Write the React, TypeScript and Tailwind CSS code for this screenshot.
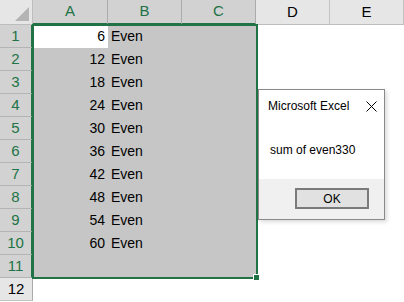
const cols = [
  { name: 'A', w: 'w-[75px]', sel: true },
  { name: 'B', w: 'w-[74px]', sel: true },
  { name: 'C', w: 'w-[74px]', sel: true },
  { name: 'D', w: 'w-[74px]', sel: false },
  { name: 'E', w: 'w-[74px]', sel: false },
]

const rows = Array.from({ length: 12 }, (_, i) => i + 1)

export default function App() {
  return (
    <div className="relative w-[404px] h-[302px] overflow-hidden bg-white font-['Liberation_Sans',sans-serif] text-[14px] text-black">
      {/* column headers */}
      <div className="flex h-[25px]">
        <div className="w-[33px] h-full bg-[#e6e6e6] border-r border-b border-[#bdbdbd] flex items-end justify-end p-[3px]">
          <svg width="14" height="14" viewBox="0 0 14 14">
            <polygon points="14,0 14,14 0,14" fill="#b4b4b4" />
          </svg>
        </div>
        {cols.map((c) => (
          <div
            key={c.name}
            className={
              c.sel
                ? `${c.w} h-full bg-[#d2d2d2] border-r border-[#ababab] border-b-2 border-b-[#217346] text-[#217346] flex items-center justify-center text-[15px]`
                : `${c.w} h-full bg-[#e6e6e6] border-r border-[#c4c4c4] border-b border-b-[#bdbdbd] flex items-center justify-center text-[15px]`
            }
          >
            {c.name}
          </div>
        ))}
      </div>

      {/* rows */}
      {rows.map((r) => {
        const sel = r <= 11
        const val = r <= 10 ? r * 6 : null
        return (
          <div key={r} className="flex h-[23px]">
            <div
              className={
                sel
                  ? 'w-[33px] h-full bg-[#d2d2d2] border-b border-[#b4b4b4] border-r-2 border-r-[#217346] text-[#217346] flex items-center justify-center text-[15px]'
                  : 'w-[33px] h-full bg-[#e6e6e6] border-b border-[#c4c4c4] border-r border-r-[#ababab] flex items-center justify-center text-[15px]'
              }
            >
              {r}
            </div>
            <div className={`w-[75px] h-full flex items-center justify-end pr-[3px] ${r === 1 ? 'bg-white' : sel ? 'bg-[#c6c6c6]' : ''}`}>
              {val}
            </div>
            <div className={`w-[74px] h-full flex items-center pl-[3px] ${sel ? 'bg-[#c6c6c6]' : ''}`}>
              {val ? 'Even' : ''}
            </div>
            <div className={`w-[74px] h-full ${sel ? 'bg-[#c6c6c6]' : ''}`} />
            <div className="w-[74px] h-full" />
            <div className="w-[74px] h-full" />
          </div>
        )
      })}

      {/* selection border */}
      <div className="absolute left-[32px] top-[24px] w-[226px] h-[255px] border-2 border-[#217346] pointer-events-none" />
      <div className="absolute left-[253px] top-[274px] w-[7px] h-[7px] bg-[#217346] border border-white" />

      {/* message box */}
      <div className="absolute left-[258px] top-[89px] w-[127px] h-[131px] border border-[#8a8a8a] bg-white flex flex-col font-['DejaVu_Sans',sans-serif] text-[11px] shadow-[2px_2px_4px_rgba(0,0,0,0.15)]">
        <div className="flex items-center justify-between h-[32px] pl-[9px] pr-[7px]">
          <span className="font-['Liberation_Sans',sans-serif] text-[12px]">Microsoft Excel</span>
          <svg width="11" height="11" viewBox="0 0 11 11">
            <path d="M0.5 0.5 L10.5 10.5 M10.5 0.5 L0.5 10.5" stroke="#000" strokeWidth="1" />
          </svg>
        </div>
        <div className="flex-1 flex items-center pl-[11px] pb-[2px]">
          <span className="font-['Liberation_Sans',sans-serif] text-[12px]">sum of even330</span>
        </div>
        <div className="h-[40px] bg-[#f0f0f0] flex items-center justify-end pr-[15px] pb-[1px]">
          <div className="w-[74px] h-[21px] border-2 border-[#7a7a7a] bg-[#e1e1e1] flex items-center justify-center font-['Liberation_Sans',sans-serif] text-[12px]">
            OK
          </div>
        </div>
      </div>
    </div>
  )
}
